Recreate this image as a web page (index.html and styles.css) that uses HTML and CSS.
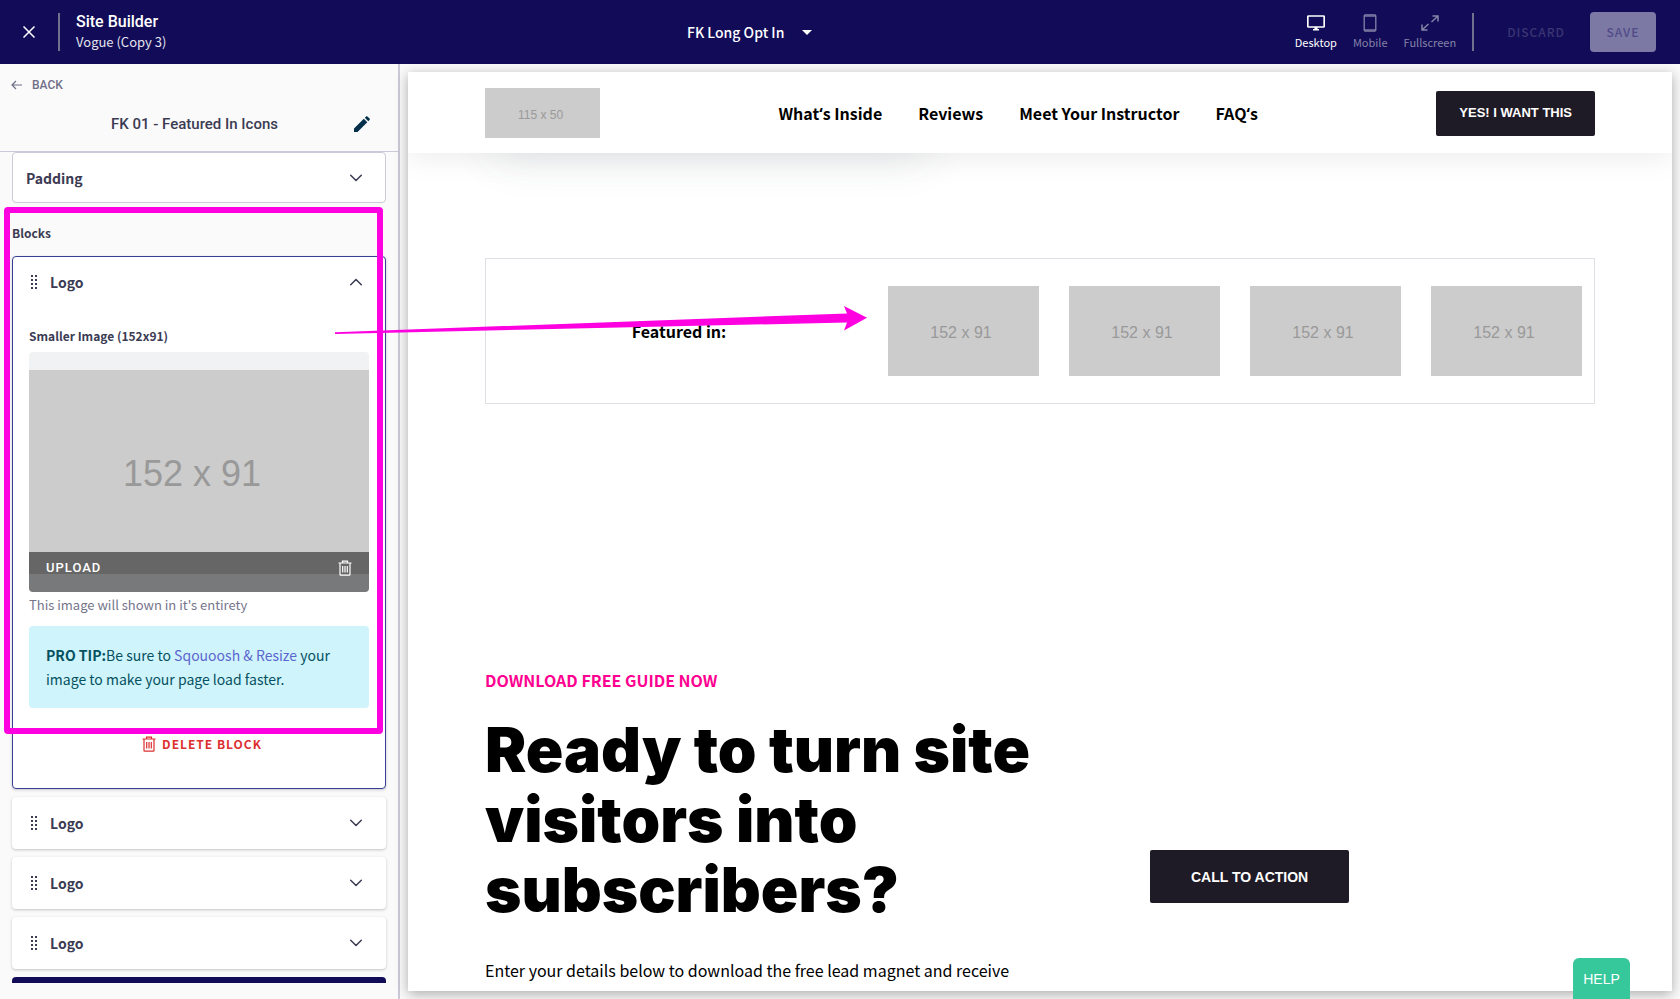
FILE: index.html
```html
<!DOCTYPE html>
<html lang="en">
<head>
<meta charset="utf-8">
<title>Site Builder</title>
<link rel="stylesheet" href="styles.css">
</head>
<body>
<svg class="sprite" aria-hidden="true">
  <symbol id="chevron" viewBox="0 0 12 8"><path d="M.7 1.200 6 6.500l5.300-5.300" fill="none" stroke="currentColor" stroke-width="1.500" stroke-linecap="round" stroke-linejoin="round"/></symbol>
  <symbol id="grip" viewBox="0 0 6 14"><path d="M0 0h2v2H0zM4 0h2v2H4zM0 4h2v2H0zM4 4h2v2H4zM0 8h2v2H0zM4 8h2v2H4zM0 12h2v2H0zM4 12h2v2H4z" fill="currentColor"/></symbol>
  <symbol id="trash" viewBox="0 0 14 16"><path d="M.5 3h13M4.500 3V1.200h5V3M2 3.200v11.300q0 .7.700.7h8.600q.7 0 .7-.7V3.200M4.700 6v6.500M7 6v6.500M9.300 6v6.500" fill="none" stroke="currentColor" stroke-width="1.200"/></symbol>
</svg>

<header class="topbar">
  <div class="topbar-left">
    <button class="icon-button" aria-label="Close"><svg width="12" height="12" viewBox="0 0 12 12"><path d="M.5.5l11 11M11.500.5l-11 11" stroke="currentColor" stroke-width="1.500"/></svg></button>
    <span class="divider"></span>
    <div class="site">
      <h1 class="site-title">Site Builder</h1>
      <p class="site-name">Vogue (Copy 3)</p>
    </div>
  </div>
  <div class="page-picker">
    <select class="page-select" aria-label="Page"><option>FK Long Opt In</option></select>
    <svg class="caret" width="10" height="5" viewBox="0 0 10 5"><path d="M0 0h10L5 5z" fill="currentColor"/></svg>
  </div>
  <div class="topbar-right">
    <div class="views">
      <button class="view view-active"><svg width="18" height="18" viewBox="0 0 18 18"><path d="M1.500 2h15q.7 0 .7.700v9.600q0 .7-.7.700h-15q-.7 0-.7-.700V2.700Q.8 2 1.500 2z" fill="none" stroke="currentColor" stroke-width="1.700"/><path d="M7.500 13h3v2h1.500v1.500H6V15h1.500z" fill="currentColor"/></svg>Desktop</button>
      <button class="view"><svg width="18" height="18" viewBox="0 0 18 18"><rect x="3.200" y="1" width="11.600" height="16" rx="1" fill="none" stroke="currentColor" stroke-width="1.300"/><path d="M3 2.200h12M3 15.800h12" stroke="currentColor" stroke-width="1"/></svg>Mobile</button>
      <button class="view"><svg width="18" height="18" viewBox="0 0 18 18"><path d="M11.500 2H17v5.500M16.500 2.500l-6 5.500M6.500 16H1v-5.500M1.500 15.500l6-5.500" fill="none" stroke="currentColor" stroke-width="1.500"/></svg>Fullscreen</button>
    </div>
    <span class="divider"></span>
    <button class="discard" disabled>DISCARD</button>
    <button class="save" disabled>SAVE</button>
  </div>
</header>

<div class="workspace">
  <aside class="sidebar">
    <div class="sidebar-head">
      <a class="back" href="#"><svg width="12" height="10" viewBox="0 0 12 10"><path d="M11 5H1M5 1L1 5l4 4" fill="none" stroke="currentColor" stroke-width="1.200"/></svg>BACK</a>
      <div class="section-row">
        <h2 class="section-title">FK 01 - Featured In Icons</h2>
        <button class="icon-button edit" aria-label="Rename section"><svg width="16" height="16" viewBox="0 0 16 16"><path d="M0 12.500 9.800 2.700l3.500 3.500L3.500 16H0zM10.800 1.700 12.200.4q.6-.6 1.200 0l2.200 2.200q.6.6 0 1.200l-1.300 1.400z" fill="currentColor"/></svg></button>
      </div>
    </div>
    <div class="sidebar-body">
      <button class="card card-outline">Padding<svg class="chev" width="12" height="8"><use href="#chevron"/></svg></button>
      <h3 class="group-title">Blocks</h3>
      <div class="blocks">
        <section class="card-open">
          <button class="block-head" aria-expanded="true"><svg class="grip" width="6" height="14"><use href="#grip"/></svg>Logo<svg class="chev chev-up" width="12" height="8"><use href="#chevron"/></svg></button>
          <div class="block-body">
            <h4 class="field-label">Smaller Image (152x91)</h4>
            <div class="upload">
              <div class="placeholder placeholder-large">152 x 91</div>
              <div class="upload-bar">
                <button class="upload-button">UPLOAD</button>
                <button class="icon-button" aria-label="Remove image"><svg width="14" height="16"><use href="#trash"/></svg></button>
              </div>
            </div>
            <p class="hint">This image will shown in it's entirety</p>
            <p class="tip"><strong class="tip-strong">PRO TIP:</strong>Be sure to <a class="tip-link" href="#">Sqouoosh &amp; Resize</a> your image to make your page load faster.</p>
            <button class="delete"><svg width="14" height="16"><use href="#trash"/></svg>DELETE BLOCK</button>
          </div>
        </section>
        <button class="card block-card"><svg class="grip" width="6" height="14"><use href="#grip"/></svg>Logo<svg class="chev" width="12" height="8"><use href="#chevron"/></svg></button>
        <button class="card block-card"><svg class="grip" width="6" height="14"><use href="#grip"/></svg>Logo<svg class="chev" width="12" height="8"><use href="#chevron"/></svg></button>
        <button class="card block-card"><svg class="grip" width="6" height="14"><use href="#grip"/></svg>Logo<svg class="chev" width="12" height="8"><use href="#chevron"/></svg></button>
        <button class="add-block" aria-label="Add block"></button>
      </div>
    </div>
  </aside>

  <main class="stage">
    <div class="preview">
      <header class="page-header">
        <div class="container page-header-row">
          <div class="placeholder placeholder-logo">115 x 50</div>
          <nav class="page-nav">
            <a class="nav-link" href="#">What<span class="quote">‘</span>s Inside</a>
            <a class="nav-link" href="#">Reviews</a>
            <a class="nav-link" href="#">Meet Your Instructor</a>
            <a class="nav-link" href="#">FAQ<span class="quote">‘</span>s</a>
          </nav>
          <button class="dark-button">YES! I WANT THIS</button>
        </div>
      </header>
      <div class="container page-body">
        <div class="hero-shadow"></div>
        <section class="featured">
          <h2 class="featured-title">Featured in:</h2>
          <div class="logos">
            <div class="placeholder">152 x 91</div>
            <div class="placeholder">152 x 91</div>
            <div class="placeholder">152 x 91</div>
            <div class="placeholder">152 x 91</div>
          </div>
        </section>
        <section class="optin">
          <div class="optin-text">
            <p class="eyebrow">DOWNLOAD FREE GUIDE NOW</p>
            <h2 class="headline">Ready to turn site visitors into subscribers?</h2>
            <p class="lead">Enter your details below to download the free lead magnet and receive</p>
          </div>
          <div class="optin-action"><button class="dark-button cta">CALL TO ACTION</button></div>
        </section>
      </div>
    </div>
  </main>
</div>

<button class="help">HELP</button>
<div class="mark-box"></div>
<svg class="mark-arrow" width="532" height="28" viewBox="0 0 532 28"><path d="M0 26.200 512 7.500 509 0 532 11.700 509 24.500l3-8L0 28z" fill="#ff00e1"/></svg>
</body>
</html>
```

FILE: styles.css
```css
* { box-sizing: border-box; }

body {
  margin: 0;
  height: 100vh;
  display: flex;
  flex-direction: column;
  overflow: hidden;
  position: relative;
  background: #fafafa;
  color: #3b3b53;
  font-family: "Noto Sans CJK SC", "Noto Sans", sans-serif;
  font-size: 14px;
  line-height: 20px;
}

h1, h2, h3, h4, p { margin: 0; }

button, select {
  margin: 0;
  padding: 0;
  border: 0;
  background: none;
  color: inherit;
  font: inherit;
  text-align: left;
}

a { text-decoration: none; }
svg { display: block; flex: none; }
.sprite { position: absolute; width: 0; height: 0; }
.icon-button { display: flex; }

/* Top bar */
.topbar {
  flex: none;
  display: grid;
  grid-template-columns: 1fr auto 1fr;
  align-items: center;
  height: 64px;
  padding: 0 24px 0 23px;
  background: #120c58;
  color: #fff;
}
.topbar-left { display: flex; align-items: center; }
.divider { width: 2px; height: 38px; background: #71708d; }
.topbar-left .divider { margin: 0 16px 0 23px; }
.site-title { font: 500 16px/20px Roboto, sans-serif; }
.site-name { font-size: 13px; line-height: 20px; color: #e4e4ee; }
.page-picker { display: flex; align-items: center; gap: 17px; padding-right: 180px; }
.page-select { appearance: none; font-weight: 500; font-size: 14px; }
.topbar-right { display: flex; align-items: center; justify-content: flex-end; }
.views { display: flex; gap: 16px; margin-right: 16px; }
.view {
  display: flex;
  flex-direction: column;
  align-items: center;
  gap: 1px;
  color: #8582a8;
  font-size: 11px;
  line-height: 18px;
}
.view-active { color: #fff; }
.discard, .save { font-weight: 500; font-size: 12px; letter-spacing: 1px; }
.discard { margin: 0 25px 0 33px; color: #3a3573; }
.save {
  width: 66px;
  height: 40px;
  border-radius: 4px;
  background: #7d79a5;
  color: #504b88;
  text-align: center;
}

/* Sidebar */
.workspace { flex: 1; min-height: 0; display: flex; }
.sidebar {
  flex: none;
  width: 400px;
  display: flex;
  flex-direction: column;
  padding-bottom: 16px;
  border-right: 2px solid #cacad8;
}
.sidebar-head { flex: none; height: 88px; padding: 11px 28px 0 11px; border-bottom: 1px solid #cacad8; }
.back {
  display: flex;
  align-items: center;
  gap: 9px;
  color: #6f6f87;
  font: 500 12px/20px Roboto, sans-serif;
}
.section-row { display: flex; align-items: center; padding: 19px 0 0 24px; }
.section-title { flex: 1; text-align: center; font: 500 15px/20px Roboto, sans-serif; }
.edit { color: #02304a; }
.sidebar-body { flex: 1; min-height: 0; overflow: hidden; padding: 0 12px; }
.card {
  display: flex;
  align-items: center;
  width: 100%;
  height: 52px;
  border-radius: 4px;
  background: #fff;
  font-weight: 700;
}
.card-outline { height: 51px; padding: 0 23px 0 13px; border: 1px solid #cacad8; }
.chev { margin-left: auto; }
.chev-up { transform: rotate(180deg); }
.grip { margin-right: 13px; }
.group-title { margin: 20px 0 13px; font-size: 12px; line-height: 20px; font-weight: 700; }
.blocks { display: flex; flex-direction: column; gap: 8px; }
.block-card { padding: 0 24px 0 19px; box-shadow: 0 1px 3px rgba(0, 0, 0, .22); }
.card-open {
  border: 1px solid #393f97;
  border-radius: 4px;
  background: #fff;
  box-shadow: 0 1px 3px rgba(0, 0, 0, .2);
}
.block-head {
  display: flex;
  align-items: center;
  width: 100%;
  height: 50px;
  padding: 0 23px 0 18px;
  font-weight: 700;
}
.block-body { padding: 19px 16px 34px; }
.field-label { font-size: 12px; line-height: 20px; font-weight: 700; }
.upload {
  position: relative;
  height: 240px;
  margin-top: 6px;
  padding: 18px 0;
  border-radius: 4px;
  overflow: hidden;
  background: #f1f2f4;
}
.upload-bar {
  position: absolute;
  inset: auto 0 0;
  display: flex;
  align-items: center;
  justify-content: space-between;
  height: 40px;
  padding: 0 17px 8px;
  background: rgba(0, 0, 0, .5);
  color: #fff;
}
.upload-button { font: 500 13px/20px Roboto, sans-serif; letter-spacing: 1px; }
.hint { margin-top: 3px; color: #75758c; font-size: 13px; line-height: 20px; }
.tip {
  margin-top: 11px;
  padding: 17px;
  border-radius: 4px;
  background: #cff4fc;
  color: #055160;
  line-height: 24px;
}
.tip-strong { font-weight: 700; }
.tip-link { color: #5c66cf; }
.delete {
  display: flex;
  align-items: center;
  gap: 6px;
  margin: 26px auto 0;
  padding-left: 6px;
  color: #dc2f2f;
  font-size: 12px;
  line-height: 20px;
  font-weight: 700;
  letter-spacing: 1px;
}
.add-block { height: 52px; border-radius: 4px; background: #120c58; }

/* Image placeholders */
.placeholder {
  display: flex;
  align-items: center;
  justify-content: center;
  height: 90px;
  padding: 4px 5px 0 0;
  background: #ccc;
  color: #999;
  font: 16px/20px "Liberation Sans", sans-serif;
}
.placeholder-large { height: 204px; padding: 4px 14px 0 0; font-size: 36px; line-height: 48px; }
.placeholder-logo { width: 115px; height: 50px; padding: 3px 4px 0 0; font-size: 12px; }

/* Page preview */
.stage { flex: 1; min-width: 0; padding: 8px; }
.preview {
  height: 100%;
  overflow: hidden;
  background: #fff;
  color: #000;
  box-shadow: 0 3px 12px rgba(0, 0, 0, .32);
}
.container { max-width: 1110px; margin: 0 auto; }
.page-header {
  position: relative;
  z-index: 1;
  padding: 16px 0 15px;
  background: #fff;
  box-shadow: 0 5px 30px rgba(0, 0, 0, .08);
}
.page-header-row { display: flex; align-items: center; justify-content: space-between; }
.page-nav { display: flex; gap: 36px; }
.nav-link { color: #000; font-size: 16px; line-height: 24px; font-weight: 700; }
.quote { font-family: "Noto Sans", sans-serif; }
.dark-button {
  height: 45px;
  padding: 0 23px;
  border-radius: 2px;
  background: #1f1b26;
  color: #fff;
  font: 700 13px/20px "Liberation Sans", sans-serif;
}
.page-body { position: relative; padding-top: 105px; }
.hero-shadow {
  position: absolute;
  top: -60px;
  left: 10px;
  width: 430px;
  height: 55px;
  box-shadow: 0 8px 48px rgba(60, 72, 88, .12);
}
.featured {
  display: flex;
  align-items: center;
  gap: 16px;
  padding: 27px 12px 27px 0;
  border: 1px solid #dfdfe6;
  background: #fff;
}
.featured-title { flex: 1; text-align: center; font-size: 16px; line-height: 24px; font-weight: 700; }
.logos { flex: 0 0 694px; display: grid; grid-template-columns: repeat(4, 1fr); gap: 30px; }
.optin { display: flex; align-items: center; margin-top: 264px; }
.optin-text { flex: 0 0 585px; padding-bottom: 101px; }
.eyebrow { color: #ff0090; font-size: 16px; line-height: 24px; font-weight: 700; }
.headline { margin: 23px 0 32px; font: 900 62px/70px Inter, sans-serif; }
.lead { font-size: 16px; line-height: 27px; white-space: nowrap; }
.optin-action { padding-left: 80px; }
.cta { height: 53px; padding: 0 41px; font-size: 14px; }

/* Floating help tab */
.help {
  position: absolute;
  right: 50px;
  bottom: 0;
  width: 57px;
  height: 41px;
  border-radius: 6px 6px 0 0;
  background: #36c79b;
  color: #fff;
  text-align: center;
  font: 14px/20px "Liberation Sans", sans-serif;
}

/* Annotations drawn over the screen */
.mark-box {
  position: absolute;
  left: 4px;
  top: 207px;
  width: 379px;
  height: 527px;
  border: 6px solid #ff00e1;
  border-radius: 4px;
}
.mark-arrow { position: absolute; left: 335px; top: 306px; }
```
